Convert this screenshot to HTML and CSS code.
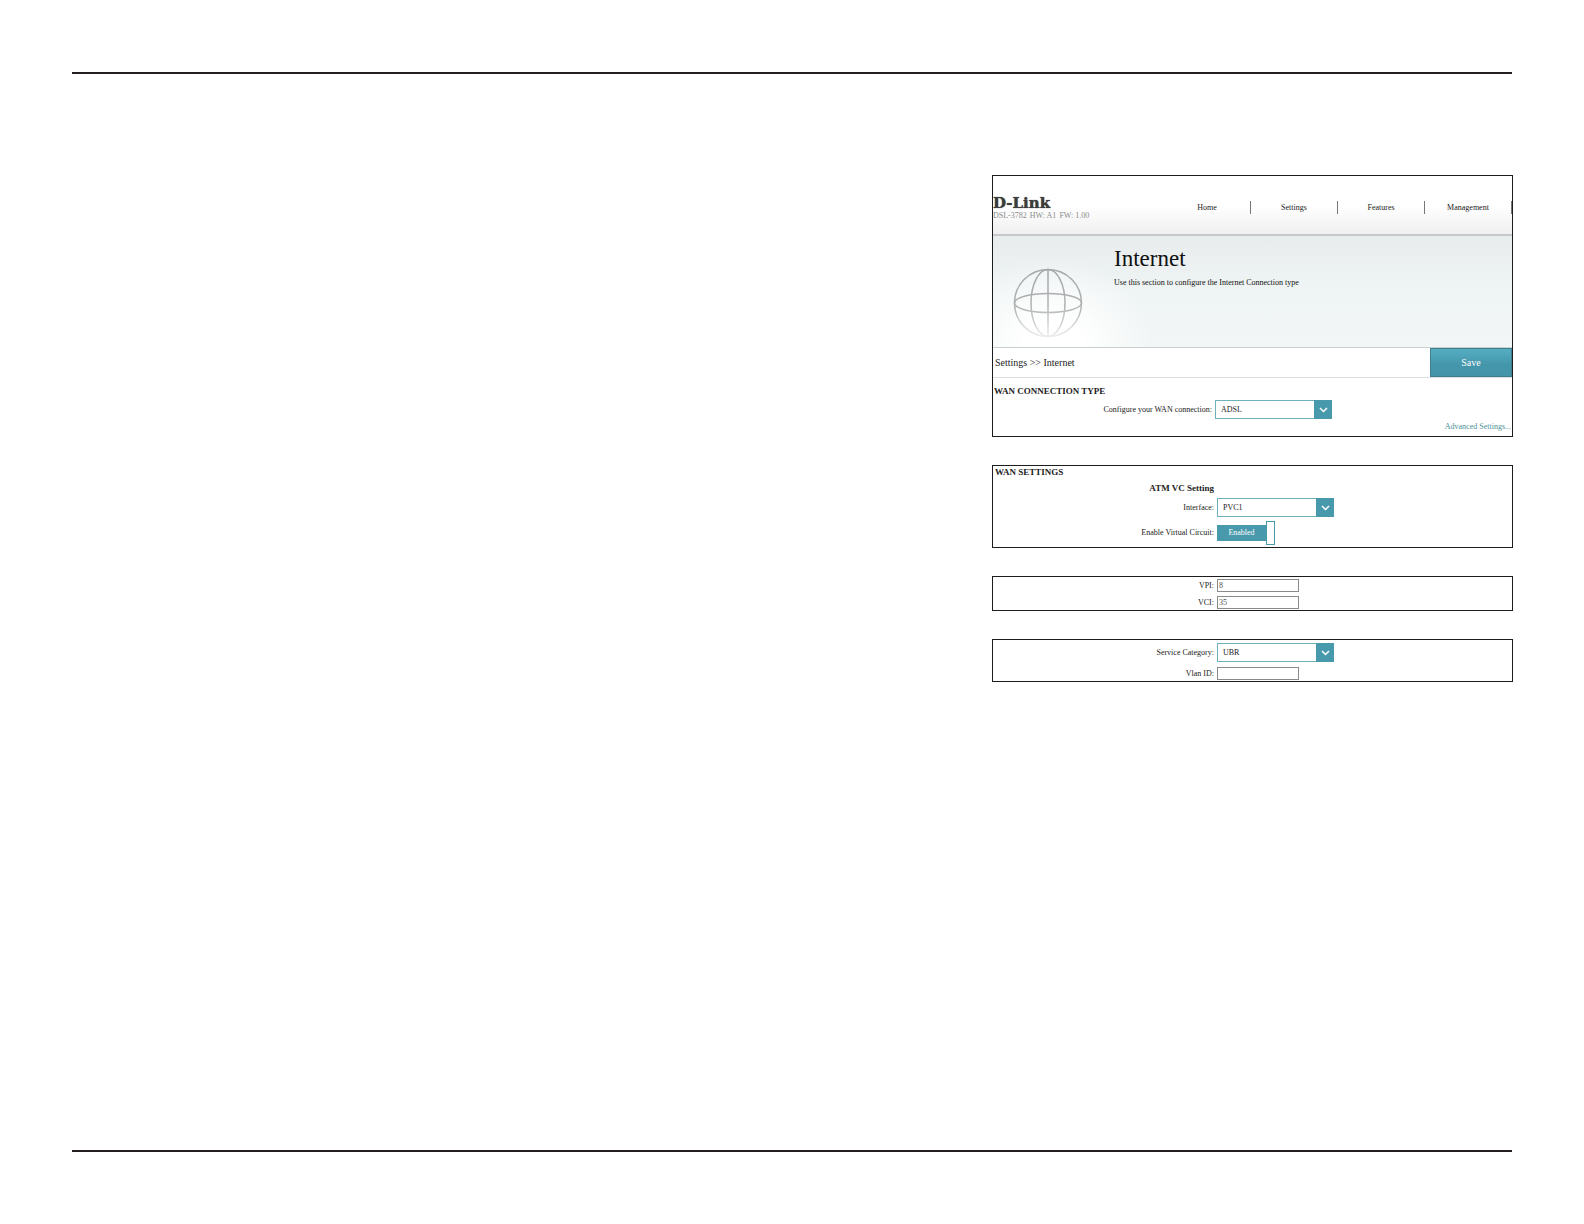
FILE: index.html
```
<!DOCTYPE html>
<html lang="en">
<head>
  <meta charset="UTF-8" />
  <meta name="viewport" content="width=device-width, initial-scale=1" />
  <title>D-Link - Internet</title>
  <link rel="stylesheet" href="styles.css">
</head>
<body>

<hr class="rule">

<main class="content">
  <section class="panel">
    <header class="topbar">
      <div class="brand">
        <div class="logo">D-Link</div>
        <div class="device"><span>DSL-3782</span><span>HW: A1</span><span>FW: 1.00</span></div>
      </div>
      <nav class="menu">
        <a href="#">Home</a>
        <a href="#">Settings</a>
        <a href="#">Features</a>
        <a href="#">Management</a>
      </nav>
    </header>

    <div class="hero">
      <svg class="globe" viewBox="0 0 70 70" aria-hidden="true">
        <defs>
          <linearGradient id="fade" gradientUnits="userSpaceOnUse" x1="0" y1="0" x2="0" y2="70">
            <stop offset="0" stop-color="#a2a5a6" />
            <stop offset="0.55" stop-color="#b0b2b3" />
            <stop offset="1" stop-color="#eef0f0" />
          </linearGradient>
        </defs>
        <g fill="none" stroke="url(#fade)" stroke-width="1.5">
          <circle cx="35" cy="35" r="33.5" />
          <ellipse cx="35" cy="35" rx="17" ry="33.5" />
          <ellipse cx="35" cy="35" rx="33.5" ry="9.5" />
          <path d="M35 1.5L35.01 68.5" />
        </g>
      </svg>
      <div class="hero-text">
        <h1>Internet</h1>
        <p>Use this section to configure the Internet Connection type</p>
      </div>
    </div>

    <div class="crumbs">
      <span>Settings &gt;&gt; Internet</span>
      <button class="save-btn" type="button">Save</button>
    </div>

    <h2 class="section-title type-title">WAN CONNECTION TYPE</h2>
    <div class="row row-type">
      <label for="wanType">Configure your WAN connection:</label>
      <div class="select">
        <select id="wanType"><option>ADSL</option></select>
        <svg class="arrow" viewBox="0 0 18 19" aria-hidden="true"><path d="M6 8l3.5 3.5L13 8" /></svg>
      </div>
    </div>
    <a class="advanced" href="#">Advanced Settings...</a>
  </section>

  <section class="panel settings">
    <h2 class="section-title">WAN SETTINGS</h2>
    <div class="row"><h3>ATM VC Setting</h3></div>
    <div class="row">
      <label for="iface">Interface:</label>
      <div class="select">
        <select id="iface"><option>PVC1</option></select>
        <svg class="arrow" viewBox="0 0 18 19" aria-hidden="true"><path d="M6 8l3.5 3.5L13 8" /></svg>
      </div>
    </div>
    <div class="row">
      <label for="circuit">Enable Virtual Circuit:</label>
      <div class="switch">
        <span>Enabled</span>
        <input type="checkbox" id="circuit" checked />
      </div>
    </div>
  </section>

  <section class="panel circuit">
    <div class="row">
      <label for="vpi">VPI:</label>
      <input class="field" type="text" id="vpi" value="8" />
    </div>
    <div class="row">
      <label for="vci">VCI:</label>
      <input class="field" type="text" id="vci" value="35" />
    </div>
  </section>

  <section class="panel service">
    <div class="row">
      <label for="category">Service Category:</label>
      <div class="select">
        <select id="category"><option>UBR</option></select>
        <svg class="arrow" viewBox="0 0 18 19" aria-hidden="true"><path d="M6 8l3.5 3.5L13 8" /></svg>
      </div>
    </div>
    <div class="row">
      <label for="vlan">Vlan ID:</label>
      <input class="field" type="text" id="vlan" />
    </div>
  </section>
</main>

<hr class="rule">

</body>
</html>
```
FILE: styles.css
```
* {
  box-sizing: border-box;
}
body {
  font-family: "Liberation Serif", "Times New Roman", serif;
  font-size: 8px;
  line-height: 10px;
  margin: 0;
  padding: 72px 71px 72px 72px;
  background: #fff;
  color: #222;
  min-height: 100vh;
  display: flex;
  flex-direction: column;
}
h1, h2, h3, p {
  margin: 0;
}
a {
  color: inherit;
  text-decoration: none;
}
input, select, button {
  font-family: inherit;
  margin: 0;
}
.rule {
  margin: 0 1px 0 0;
  border: none;
  border-top: 2px solid #231f20;
}
.content {
  flex: 1;
  display: flex;
  flex-direction: column;
  align-items: flex-end;
  gap: 28px;
  padding: 101px 0 28px;
}
.panel {
  width: 36%;
  min-width: 521px;
  border: 1px solid #1c1c20;
}

/* Header */
.topbar {
  display: flex;
  justify-content: space-between;
  padding-top: 19px;
  height: 60px;
  border-bottom: 2px solid #c6c9c9;
  background: linear-gradient(#fff 50%, #f0f0f0);
}
.logo {
  font-family: "DejaVu Serif", serif;
  font-size: 15px;
  font-weight: bold;
  line-height: 16px;
  color: #3c3c3c;
  text-shadow: 0 0 1px #3c3c3c;
}
.device {
  display: flex;
  gap: 3px;
  color: #8c8c8c;
}
.menu {
  display: flex;
  padding-top: 6px;
}
.menu a {
  width: 87px;
  height: 13px;
  line-height: 14px;
  text-align: center;
  border-right: 1px solid #777;
}

/* Banner */
.hero {
  display: flex;
  gap: 31px;
  height: 112px;
  padding: 10px 20px 0;
  border-bottom: 1px solid #c8d0d0;
  background:
    radial-gradient(ellipse 100px 90px at 60px 100%, #fff 30%, rgba(255, 255, 255, 0)),
    linear-gradient(#e8ecec, #eff4f4 50%, #f2f6f6);
}
.globe {
  width: 70px;
  height: 70px;
  margin-top: 22px;
}
.hero h1 {
  font-size: 23px;
  font-weight: normal;
  line-height: 26px;
  color: #111;
}
.hero p {
  margin-top: 6px;
  color: #111;
}
.crumbs {
  display: flex;
  justify-content: space-between;
  align-items: center;
  padding-left: 2px;
  font-size: 10px;
  border-bottom: 1px solid #dde0e0;
}
.save-btn {
  width: 82px;
  height: 29px;
  padding: 0;
  font-size: 10px;
  color: #fff;
  background: linear-gradient(#55adc2, #4496aa 60%, #4494a8);
  border: 1px solid #417f8e;
  cursor: pointer;
}

/* Form rows */
.section-title {
  padding-left: 2px;
  font-size: 9px;
  line-height: 12px;
}
.type-title {
  padding: 7px 0 3px 1px;
}
.row {
  display: grid;
  grid-template-columns: 221fr 295fr;
  gap: 3px;
  align-items: center;
  text-align: right;
}
.row-type {
  grid-template-columns: 219fr 297fr;
}
.row h3 {
  font-size: 9px;
  line-height: 12px;
}
.select {
  position: relative;
  width: 117px;
}
.select select {
  display: block;
  width: 100%;
  height: 19px;
  padding: 0 20px 0 5px;
  font-size: 8px;
  color: #222;
  background: #fff;
  border: 1px solid #6fb0bd;
  border-radius: 0;
  appearance: none;
}
.arrow {
  position: absolute;
  top: 0;
  right: 0;
  width: 18px;
  height: 19px;
  background: #4899ac;
  pointer-events: none;
}
.arrow path {
  fill: none;
  stroke: #fff;
  stroke-width: 1.5;
}
.advanced {
  display: block;
  padding: 3px 1px 4px 0;
  text-align: right;
  color: #4a9098;
}
.settings {
  padding-bottom: 2px;
}
.settings .row {
  margin-top: 4px;
}
.switch {
  display: flex;
  align-items: center;
}
.switch span {
  width: 49px;
  line-height: 16px;
  text-align: center;
  color: #fff;
  background: #4899ac;
}
.switch input {
  width: 9px;
  height: 24px;
  background: #fff;
  border: 1px solid #4899ac;
  appearance: none;
}
.field {
  width: 82px;
  height: 13px;
  padding: 0 1px;
  font-size: 8px;
  color: #555;
  background: #fff;
  border: 1px solid #8a8a8a;
}
.circuit, .service {
  display: flex;
  flex-direction: column;
  gap: 4px;
  padding: 2px 0 1px;
}
.service {
  gap: 5px;
  padding-top: 3px;
}
```
